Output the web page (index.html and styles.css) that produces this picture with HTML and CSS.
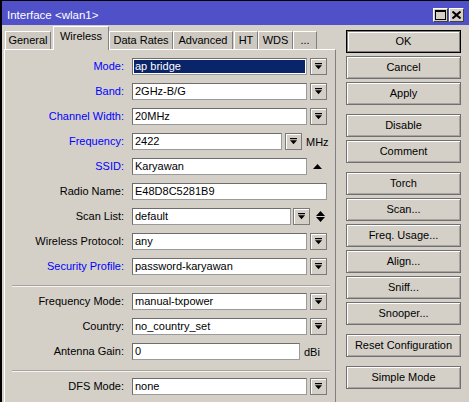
FILE: index.html
```html
<!DOCTYPE html>
<html>
<head>
<meta charset="utf-8">
<link rel="stylesheet" href="styles.css">
</head>
<body>
<div class="window">
  <div class="titlebar">
    <span class="title">Interface &lt;wlan1&gt;</span>
    <div class="tbtns">
      <span class="tbtn"><svg width="11" height="10" viewBox="0 0 11 10"><rect x="0.5" y="0.5" width="10" height="9" fill="none" stroke="#000"/><rect x="0" y="0" width="11" height="2" fill="#000"/></svg></span>
      <span class="tbtn"><svg width="9" height="8" viewBox="0 0 9 8"><path d="M0.5 0.5 L8.5 7.5 M8.5 0.5 L0.5 7.5" stroke="#000" stroke-width="2"/></svg></span>
    </div>
  </div>
  <div class="main">
    <div class="left">
      <div class="tabs">
        <div class="tab t-general">General</div>
        <div class="tab active t-wireless">Wireless</div>
        <div class="tab t-rates">Data Rates</div>
        <div class="tab t-adv">Advanced</div>
        <div class="tab t-ht">HT</div>
        <div class="tab t-wds">WDS</div>
        <div class="tab t-more">...</div>
      </div>
      <div class="panel">
        <div class="rows">
          <label class="lbl blue">Mode:</label>
          <div class="ctl"><div class="field w175 sel">ap bridge</div><span class="dd"><svg width="7" height="7" viewBox="0 0 7 7"><rect x="0" y="0" width="7" height="1.2" fill="#000"/><path d="M0 2.2 H7 L3.5 6.2 Z" fill="#000"/></svg></span></div>

          <label class="lbl blue">Band:</label>
          <div class="ctl"><div class="field w175">2GHz-B/G</div><span class="dd"><svg width="7" height="7" viewBox="0 0 7 7"><rect x="0" y="0" width="7" height="1.2" fill="#000"/><path d="M0 2.2 H7 L3.5 6.2 Z" fill="#000"/></svg></span></div>

          <label class="lbl blue">Channel Width:</label>
          <div class="ctl"><div class="field w175">20MHz</div><span class="dd"><svg width="7" height="7" viewBox="0 0 7 7"><rect x="0" y="0" width="7" height="1.2" fill="#000"/><path d="M0 2.2 H7 L3.5 6.2 Z" fill="#000"/></svg></span></div>

          <label class="lbl blue">Frequency:</label>
          <div class="ctl"><div class="field w150">2422</div><span class="dd"><svg width="7" height="7" viewBox="0 0 7 7"><rect x="0" y="0" width="7" height="1.2" fill="#000"/><path d="M0 2.2 H7 L3.5 6.2 Z" fill="#000"/></svg></span><span class="unit">MHz</span></div>

          <label class="lbl blue">SSID:</label>
          <div class="ctl"><div class="field w175">Karyawan</div><span class="arr"><svg width="9" height="5" viewBox="0 0 9 5"><path d="M0 5 H9 L4.5 0 Z" fill="#000"/></svg></span></div>

          <label class="lbl">Radio Name:</label>
          <div class="ctl"><div class="field w195">E48D8C5281B9</div></div>

          <label class="lbl">Scan List:</label>
          <div class="ctl"><div class="field w159">default</div><span class="dd dd2"><svg width="7" height="7" viewBox="0 0 7 7"><rect x="0" y="0" width="7" height="1.2" fill="#000"/><path d="M0 2.2 H7 L3.5 6.2 Z" fill="#000"/></svg></span><span class="arr"><svg width="9" height="11" viewBox="0 0 9 11"><path d="M0 5 H9 L4.5 0 Z M0 6 H9 L4.5 11 Z" fill="#000"/></svg></span></div>

          <label class="lbl">Wireless Protocol:</label>
          <div class="ctl"><div class="field w175">any</div><span class="dd"><svg width="7" height="7" viewBox="0 0 7 7"><rect x="0" y="0" width="7" height="1.2" fill="#000"/><path d="M0 2.2 H7 L3.5 6.2 Z" fill="#000"/></svg></span></div>

          <label class="lbl blue">Security Profile:</label>
          <div class="ctl"><div class="field w175">password-karyawan</div><span class="dd"><svg width="7" height="7" viewBox="0 0 7 7"><rect x="0" y="0" width="7" height="1.2" fill="#000"/><path d="M0 2.2 H7 L3.5 6.2 Z" fill="#000"/></svg></span></div>
        </div>
        <div class="sep"></div>
        <div class="rows">
          <label class="lbl">Frequency Mode:</label>
          <div class="ctl"><div class="field w175">manual-txpower</div><span class="dd"><svg width="7" height="7" viewBox="0 0 7 7"><rect x="0" y="0" width="7" height="1.2" fill="#000"/><path d="M0 2.2 H7 L3.5 6.2 Z" fill="#000"/></svg></span></div>

          <label class="lbl">Country:</label>
          <div class="ctl"><div class="field w175">no_country_set</div><span class="dd"><svg width="7" height="7" viewBox="0 0 7 7"><rect x="0" y="0" width="7" height="1.2" fill="#000"/><path d="M0 2.2 H7 L3.5 6.2 Z" fill="#000"/></svg></span></div>

          <label class="lbl">Antenna Gain:</label>
          <div class="ctl"><div class="field w168">0</div><span class="unit">dBi</span></div>
        </div>
        <div class="sep sep2"></div>
        <div class="rows">
          <label class="lbl">DFS Mode:</label>
          <div class="ctl"><div class="field w175">none</div><span class="dd"><svg width="7" height="7" viewBox="0 0 7 7"><rect x="0" y="0" width="7" height="1.2" fill="#000"/><path d="M0 2.2 H7 L3.5 6.2 Z" fill="#000"/></svg></span></div>
        </div>
      </div>
    </div>
    <div class="right">
      <div class="group">
        <div class="btn default">OK</div>
        <div class="btn">Cancel</div>
        <div class="btn">Apply</div>
      </div>
      <div class="group">
        <div class="btn">Disable</div>
        <div class="btn">Comment</div>
      </div>
      <div class="group">
        <div class="btn">Torch</div>
        <div class="btn">Scan...</div>
        <div class="btn">Freq. Usage...</div>
        <div class="btn">Align...</div>
        <div class="btn">Sniff...</div>
        <div class="btn">Snooper...</div>
      </div>
      <div class="group">
        <div class="btn">Reset Configuration</div>
      </div>
      <div class="group">
        <div class="btn">Simple Mode</div>
      </div>
    </div>
  </div>
</div>
</body>
</html>
```

FILE: styles.css
```css
* { box-sizing: border-box; }
html, body { margin: 0; padding: 0; }
body {
  font-family: "Liberation Sans", Arial, sans-serif;
  font-size: 11px;
  color: #000;
  background: #d4d0c8;
}
.window {
  width: 469px;
  height: 402px;
  overflow: hidden;
  background: #d4d0c8;
  border-left: 2px solid #000;
  display: flex;
  flex-direction: column;
}
.titlebar {
  height: 25px;
  flex: none;
  background: #5050c8;
  border-top: 1px solid #000;
  display: flex;
  align-items: center;
  justify-content: space-between;
  padding: 1px 5px 0 5px;
}
.title {
  color: #fff;
  font-size: 11.5px;
  padding-top: 2px;
}
.tbtns { display: flex; gap: 1px; margin-top: 3px; }
.tbtn {
  width: 15px;
  height: 14px;
  background: #d4d0c8;
  border: 1px solid;
  border-color: #fff #404040 #404040 #fff;
  display: flex;
  align-items: center;
  justify-content: center;
}
.main {
  flex: 1;
  display: flex;
  align-items: flex-start;
}
.left {
  width: 332px;
  margin-left: 2px;
  flex: none;
  display: flex;
  flex-direction: column;
}
.tabs {
  height: 24px;
  display: flex;
  align-items: flex-end;
  padding-left: 1px;
}
.tab {
  height: 18px;
  background: #cdc9c1;
  border: 1px solid;
  border-color: #fff #808080 transparent #fff;
  border-bottom: none;
  text-align: center;
  line-height: 17px;
  white-space: nowrap;
}
.tab.active {
  height: 24px;
  margin-bottom: -1px;
  background: #d4d0c8;
  line-height: 18px;
  position: relative;
  z-index: 1;
}
.t-general { width: 46px; }
.t-wireless { width: 56px; margin-left: 2px; }
.t-rates { width: 64px; }
.t-adv { width: 60px; }
.t-ht { width: 24px; margin-left: 1px; }
.t-wds { width: 35px; }
.t-more { width: 24px; }
.panel {
  border-top: 1px solid #fff;
  border-left: 1px solid #fff;
  border-right: 1px solid #808080;
  height: 360px;
  padding-top: 8px;
}
.rows {
  display: grid;
  grid-template-columns: 127px 1fr;
  grid-auto-rows: 17px;
  row-gap: 8px;
}
.lbl {
  text-align: right;
  padding-right: 8px;
  line-height: 17px;
  white-space: nowrap;
}
.lbl.blue { color: #0000ff; }
.ctl {
  display: flex;
  align-items: center;
  height: 17px;
}
.field {
  height: 17px;
  background: #fff;
  border: 1px solid;
  border-color: #6d6d6d #9a9a9a #9a9a9a #6d6d6d;
  padding-left: 2px;
  line-height: 15px;
  white-space: nowrap;
  overflow: hidden;
}
.field.sel {
  background: #0a246a;
  color: #fff;
  box-shadow: inset 0 0 0 1px #fff;
}
.w150 { width: 150px; }
.w159 { width: 159px; }
.w168 { width: 168px; }
.w175 { width: 175px; }
.w195 { width: 195px; }
.dd {
  width: 17px;
  height: 17px;
  margin-left: 3px;
  border: 1px solid #7a7a7a;
  box-shadow: inset 1px 1px 0 #fff;
  background: #d4d0c8;
  display: flex;
  align-items: center;
  justify-content: center;
  flex: none;
}
.dd2 { margin-left: 2px; }
.arr {
  width: 17px;
  margin-left: 2px;
  display: flex;
  align-items: center;
  justify-content: center;
}
.unit { margin-left: 4px; }
.sep {
  height: 2px;
  border-top: 1px solid #a8a5a0;
  border-bottom: 1px solid #f4f3f0;
  margin: 10px 5px 6px 7px;
}
.sep2 { margin-top: 10px; }
.right {
  width: 115px;
  margin-left: 10px;
  padding-top: 5px;
  display: flex;
  flex-direction: column;
  gap: 9px;
}
.group {
  display: flex;
  flex-direction: column;
  gap: 3px;
}
.btn {
  height: 23px;
  border: 1px solid #707070;
  box-shadow: inset 1px 1px 0 #fff, inset -1px -1px 0 #a8a5a0;
  background: #d4d0c8;
  text-align: center;
  line-height: 21px;
  white-space: nowrap;
}
.btn.default {
  border-color: #000;
  box-shadow: inset 0 0 0 1px #808080, inset 2px 2px 0 #fff;
}
```
